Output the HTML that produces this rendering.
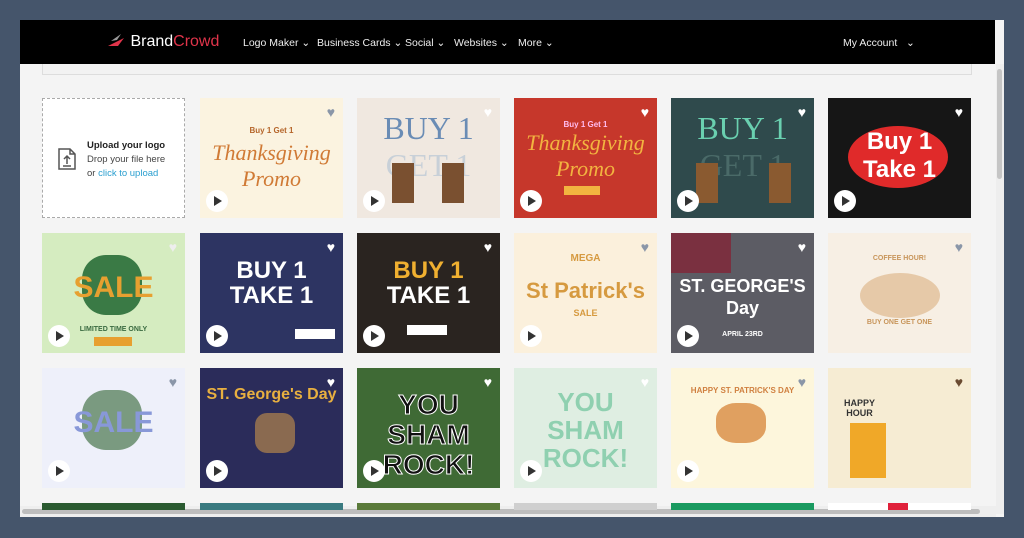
<!DOCTYPE html><html><head><meta charset="utf-8"><style>
*{margin:0;padding:0;box-sizing:border-box}
body{width:1024px;height:538px;background:#45556b;font-family:"Liberation Sans",sans-serif;position:relative;overflow:hidden}
.win{position:absolute;left:20px;top:20px;width:984px;height:497px;background:#f4f4f4;overflow:hidden}
.hdr{position:absolute;left:0;top:0;width:975px;height:44px;background:#000;color:#eee;font-size:10.5px}
.hdr span{position:absolute;top:17px}
.logo{position:absolute;left:86px;top:12px;font-size:16px;color:#fff;white-space:nowrap}
.logo b{font-weight:normal;color:#e0344a}
.bar{position:absolute;left:22px;top:44px;width:930px;height:11px;border:1px solid #ddd;border-top:none;background:#f2f2f2}
.vs{position:absolute;left:976px;top:44px;width:8px;height:450px;background:#eee}
.vs i{position:absolute;left:1px;top:5px;width:5px;height:110px;background:#c5c5c5;border-radius:3px}
.hs{position:absolute;left:0;top:486px;width:976px;height:11px;background:#eee}
.hs i{position:absolute;left:2px;top:3px;width:958px;height:5px;background:#bdbdbd;border-radius:3px}
.t{position:absolute;width:143px;height:120px;overflow:hidden;text-align:center}
.t .h{position:absolute;right:8px;top:6px;font-size:14px;color:#8a96a8}
.t .p{position:absolute;left:6px;bottom:6px;width:22px;height:22px;border-radius:50%;background:#fff}
.t .p:after{content:"";position:absolute;left:8px;top:6px;border-left:8px solid #333;border-top:5px solid transparent;border-bottom:5px solid transparent}
.t .x{position:absolute;left:0;width:143px;font-weight:bold}
.up{position:absolute;left:42px;top:98px;width:143px;height:120px;background:#fff;border:1px dashed #aaa;font-size:9.5px;color:#444}
</style></head><body>
<div class="win">
<div class="hdr">
<div class="logo"><svg width="20" height="16" viewBox="0 0 20 16" style="vertical-align:-2px"><path d="M2 14 L18 6 L12 14 Z" fill="#e0344a"/><path d="M5 9 L15 2 L11 8 Z" fill="#999"/></svg> Brand<b>Crowd</b></div>
<span style="left:223px">Logo Maker ⌄</span><span style="left:297px">Business Cards ⌄</span><span style="left:385px">Social ⌄</span><span style="left:434px">Websites ⌄</span><span style="left:498px">More ⌄</span><span style="left:823px">My Account &nbsp;&nbsp;⌄</span>
</div>
<div class="bar"></div>
<div class="vs"><i></i></div>
<div class="hs"><i></i></div>
</div>
<div class="up">
<svg style="position:absolute;left:14px;top:48px" width="20" height="24" viewBox="0 0 20 24" fill="none" stroke="#555" stroke-width="1.5"><path d="M2 2h11l5 5v15H2z M13 2v5h5 M10 17V9 M7 12l3-3 3 3 M6 19h8"/></svg>
<div style="position:absolute;left:44px;top:40px;line-height:14px"><b style="color:#222">Upload your logo</b><br>Drop your file here<br>or <span style="color:#2a9fd0">click to upload</span></div>
</div>

<div class="t" style="left:200px;top:98px;background:#fbf3e0"><div class="x" style="top:28px;font-size:8px;color:#b5652a">Buy 1 Get 1</div><div class="x" style="top:42px;font:italic 22px 'Liberation Serif',serif;color:#d07a35">Thanksgiving<br>Promo</div><div class="h">♥</div><div class="p"></div></div>
<div class="t" style="left:357px;top:98px;background:#f0e8e0"><div class="x" style="top:12px;font:32px 'Liberation Serif',serif;color:#6a8cb5">BUY 1<br><span style="color:#c8d0d8">GET 1</span></div><div style="position:absolute;left:35px;top:65px;width:22px;height:40px;background:#7a5030"></div><div style="position:absolute;left:85px;top:65px;width:22px;height:40px;background:#7a5030"></div><div class="h" style="color:#fff">♥</div><div class="p"></div></div>
<div class="t" style="left:514px;top:98px;background:#c6372b"><div class="x" style="top:22px;font-size:8px;color:#fbe">Buy 1 Get 1</div><div class="x" style="top:32px;font:italic 22px 'Liberation Serif',serif;color:#f2b440">Thanksgiving<br>Promo</div><div style="position:absolute;left:50px;top:88px;width:36px;height:9px;background:#f2b440"></div><div class="h" style="color:#fff">♥</div><div class="p"></div></div>
<div class="t" style="left:671px;top:98px;background:#2f4a4c"><div class="x" style="top:12px;font:32px 'Liberation Serif',serif;color:#6ad0b0">BUY 1<br><span style="color:#4a6a68">GET 1</span></div><div style="position:absolute;left:25px;top:65px;width:22px;height:40px;background:#8a5a30"></div><div style="position:absolute;left:98px;top:65px;width:22px;height:40px;background:#8a5a30"></div><div class="h" style="color:#fff">♥</div><div class="p"></div></div>
<div class="t" style="left:828px;top:98px;background:#161616"><div style="position:absolute;left:20px;top:28px;width:100px;height:62px;border-radius:50%;background:#e02a2a"></div><div class="x" style="top:30px;font-size:24px;color:#fff;line-height:28px">Buy 1<br>Take 1</div><div class="h" style="color:#fff">♥</div><div class="p"></div></div>

<div class="t" style="left:42px;top:233px;background:#d5ecc0"><div style="position:absolute;left:40px;top:22px;width:60px;height:60px;border-radius:40%;background:#3a7a45"></div><div class="x" style="top:38px;font-size:30px;color:#e7a030">SALE</div><div class="x" style="top:93px;font-size:7px;color:#3a6a40">LIMITED TIME ONLY</div><div style="position:absolute;left:52px;top:104px;width:38px;height:9px;background:#e7a030"></div><div class="h" style="color:#eee">♥</div><div class="p"></div></div>
<div class="t" style="left:200px;top:233px;background:#2d3462"><div class="x" style="top:25px;font-size:24px;color:#fff;line-height:25px">BUY 1<br>TAKE 1</div><div style="position:absolute;left:95px;top:96px;width:40px;height:10px;background:#fff"></div><div class="h" style="color:#fff">♥</div><div class="p"></div></div>
<div class="t" style="left:357px;top:233px;background:#2a2420"><div class="x" style="top:25px;font-size:24px;color:#f0b030;line-height:25px">BUY 1<br><span style="color:#fff">TAKE 1</span></div><div style="position:absolute;left:50px;top:92px;width:40px;height:10px;background:#fff"></div><div class="h" style="color:#fff">♥</div><div class="p"></div></div>
<div class="t" style="left:514px;top:233px;background:#fbf0dc"><div class="x" style="top:20px;font-size:10px;color:#d69a40">MEGA</div><div class="x" style="top:45px;font-size:22px;color:#d69a40">St Patrick's</div><div class="x" style="top:75px;font-size:9px;color:#d69a40">SALE</div><div class="h">♥</div><div class="p"></div></div>
<div class="t" style="left:671px;top:233px;background:#5c5c64"><div style="position:absolute;left:0;top:0;width:60px;height:40px;background:#7a3040"></div><div class="x" style="top:42px;font-size:18px;color:#fff;line-height:22px">ST. GEORGE'S<br>Day</div><div class="x" style="top:98px;font-size:7px;color:#fff">APRIL 23RD</div><div class="h" style="color:#fff">♥</div><div class="p"></div></div>
<div class="t" style="left:828px;top:233px;background:#f7efe4"><div style="position:absolute;left:32px;top:40px;width:80px;height:45px;border-radius:50%;background:#e6c9a8"></div><div class="x" style="top:22px;font-size:7px;color:#c8955a">COFFEE HOUR!</div><div class="x" style="top:86px;font-size:7px;color:#c8955a">BUY ONE GET ONE</div><div class="h">♥</div></div>

<div class="t" style="left:42px;top:368px;background:#eef0fa"><div style="position:absolute;left:40px;top:22px;width:60px;height:60px;border-radius:40%;background:#7a9a80"></div><div class="x" style="top:38px;font-size:30px;color:#8898d8">SALE</div><div class="h">♥</div><div class="p"></div></div>
<div class="t" style="left:200px;top:368px;background:#2b2c5a"><div class="x" style="top:18px;font-size:16px;color:#e8b040">ST. George's Day</div><div style="position:absolute;left:55px;top:45px;width:40px;height:40px;background:#8a6a50;border-radius:30%"></div><div class="h" style="color:#fff">♥</div><div class="p"></div></div>
<div class="t" style="left:357px;top:368px;background:#3f6a35"><div class="x" style="top:22px;font-size:28px;color:#111;line-height:30px;-webkit-text-stroke:1px #fff">YOU<br>SHAM<br>ROCK!</div><div class="h" style="color:#fff">♥</div><div class="p"></div></div>
<div class="t" style="left:514px;top:368px;background:#dfeee2"><div class="x" style="top:20px;font-size:26px;color:#8fd0b0;line-height:28px">YOU<br>SHAM<br>ROCK!</div><div class="h" style="color:#fff">♥</div><div class="p"></div></div>
<div class="t" style="left:671px;top:368px;background:#fdf6dc"><div style="position:absolute;left:45px;top:35px;width:50px;height:40px;border-radius:40%;background:#e0a060"></div><div class="x" style="top:18px;font-size:8px;color:#d08040">HAPPY ST. PATRICK'S DAY</div><div class="h">♥</div><div class="p"></div></div>
<div class="t" style="left:828px;top:368px;background:#f6ecd3"><div style="position:absolute;left:22px;top:55px;width:36px;height:55px;background:#f0a828"></div><div class="x" style="top:30px;left:-40px;font-size:9px;color:#333">HAPPY<br>HOUR</div><div class="h" style="color:#6a4a30">♥</div></div>

<div class="t" style="left:42px;top:503px;height:7px;background:#2a5a30"></div>
<div class="t" style="left:200px;top:503px;height:7px;background:#3a7a80"></div>
<div class="t" style="left:357px;top:503px;height:7px;background:#5a7a3a"></div>
<div class="t" style="left:514px;top:503px;height:7px;background:#cfcfcf"></div>
<div class="t" style="left:671px;top:503px;height:7px;background:#1a9a60"></div>
<div class="t" style="left:828px;top:503px;height:7px;background:#fff"><div style="position:absolute;left:60px;top:0;width:20px;height:7px;background:#e0203a"></div></div>
</body></html>
